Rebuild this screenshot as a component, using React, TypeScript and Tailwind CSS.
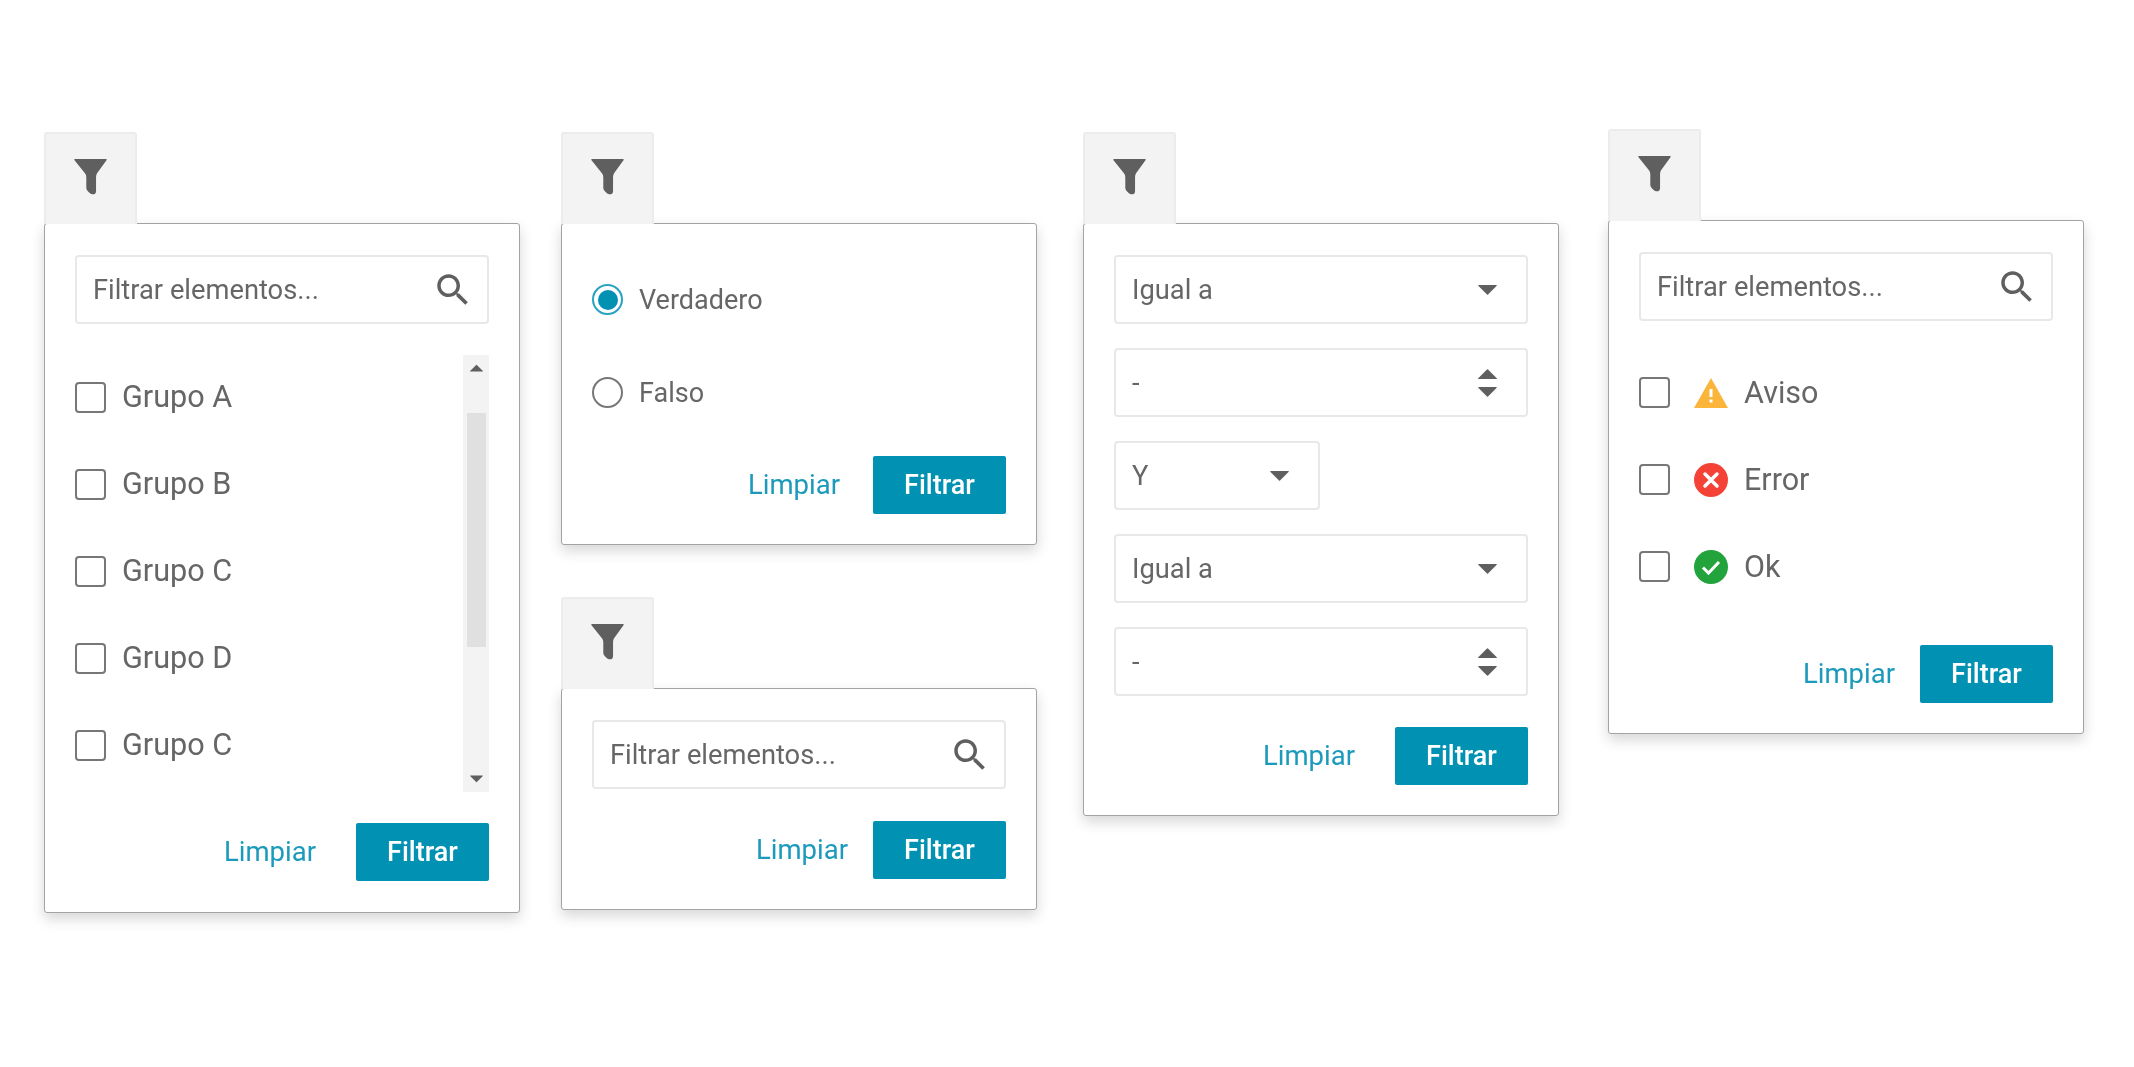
import React from 'react';

const FilterIcon = () => (
  <svg viewBox="0 0 97 107" className="w-[33px] h-[36px] text-[#5f5f5f]" fill="currentColor">
    <path d="M2 0H95Q98 0 96 4L68 42Q65 47 65 54V94Q65 106 54 105Q50 105 46 101L40 95Q36 91 36 86V54Q36 47 32 42L1 4Q-1 0 2 0Z" />
  </svg>
);

const SearchIcon = () => (
  <svg viewBox="0 0 24 24" className="w-[42px] h-[42px] text-[#5f5f5f]" fill="currentColor">
    <path d="M15.5 14h-.79l-.28-.27C15.41 12.59 16 11.11 16 9.5 16 5.91 13.09 3 9.5 3S3 5.91 3 9.5 5.91 16 9.5 16c1.61 0 3.09-.59 4.23-1.57l.27.28v.79l5 4.99L20.49 19l-4.99-5zm-6 0C7.01 14 5 11.99 5 9.5S7.01 5 9.5 5 14 7.01 14 9.5 11.99 14 9.5 14z" />
  </svg>
);

const CaretDown = ({ className = 'w-[19px] h-[10px]' }: { className?: string }) => (
  <svg viewBox="0 0 19 10" className={`${className} text-[#5f5f5f]`} fill="currentColor">
    <path d="M1 0H18Q19.500 0 18.500 1L10 9.500Q9.500 10 9 9.500L.5 1Q-.5 0 1 0Z" />
  </svg>
);

const CaretUp = ({ className = 'w-[19px] h-[10px]' }: { className?: string }) => (
  <svg viewBox="0 0 19 10" className={`${className} text-[#5f5f5f]`} fill="currentColor">
    <path d="M1 10H18Q19.500 10 18.500 9L10 .5Q9.500 0 9 .5L.5 9Q-.5 10 1 10Z" />
  </svg>
);

const WarningIcon = () => (
  <svg viewBox="0 0 34 30" className="w-[34px] h-[30px]">
    <path d="M17 0L34 30H0Z" fill="#fbb53a" />
    <rect x="15.500" y="11" width="3" height="8" fill="#fff" />
    <rect x="15.500" y="21.500" width="3" height="3" fill="#fff" />
  </svg>
);

const ErrorIcon = () => (
  <svg viewBox="0 0 34 34" className="w-[34px] h-[34px]">
    <circle cx="17" cy="17" r="17" fill="#f44336" />
    <path d="M11 11L23 23M23 11L11 23" stroke="#fff" strokeWidth="3.500" strokeLinecap="round" />
  </svg>
);

const OkIcon = () => (
  <svg viewBox="0 0 34 34" className="w-[34px] h-[34px]">
    <circle cx="17" cy="17" r="17" fill="#22a33c" />
    <path d="M9 17.500L14.500 23L25 12" stroke="#fff" strokeWidth="3" fill="none" />
  </svg>
);

const Checkbox = () => <span className="block w-[31px] h-[31px] shrink-0 rounded-[4px] border-2 border-[#777] bg-white" />;

const Panel = ({ children, className = '' }: { children: React.ReactNode; className?: string }) => (
  <div className={`w-[476px] ${className}`}>
    <div className="relative z-10 -mb-[1px] flex h-[92px] w-[93px] items-center justify-center rounded-t-[3px] border-x-2 border-t-2 border-[#ececec] bg-[#f3f3f3] pb-[4px]">
      <FilterIcon />
    </div>
    <div className="rounded-[3px] border border-[#a3a3a3] bg-white px-[30px] shadow-[0_6px_14px_rgba(0,0,0,0.16)]">{children}</div>
  </div>
);

const Actions = ({ gap }: { gap: string }) => (
  <div className={`flex items-center justify-end ${gap}`}>
    <span className="text-[27.500px] text-[#1b9abb]">Limpiar</span>
    <span className="flex h-[58px] w-[133px] items-center justify-center rounded-[2px] bg-[#0091b3] text-[27px] font-medium text-white">Filtrar</span>
  </div>
);

const Field = ({ children, className = 'w-full' }: { children: React.ReactNode; className?: string }) => (
  <div className={`flex h-[69px] items-center justify-between rounded-[4px] border-2 border-[#e8e8e8] bg-white pl-[16px] text-[27.300px] text-[#666] ${className}`}>
    {children}
  </div>
);

const SearchField = () => (
  <Field>
    <span className="pt-[2px]">Filtrar elementos...</span>
    <span className="mr-[13px]">
      <SearchIcon />
    </span>
  </Field>
);

const SelectField = ({ label, className }: { label: string; className?: string }) => (
  <Field className={className}>
    <span className="pt-[2px]">{label}</span>
    <span className="mr-[29px]">
      <CaretDown />
    </span>
  </Field>
);

const NumberField = () => (
  <Field>
    <span className="pt-[2px]">-</span>
    <span className="mr-[29px] flex flex-col gap-[8px]">
      <CaretUp />
      <CaretDown />
    </span>
  </Field>
);

const groups = ['Grupo A', 'Grupo B', 'Grupo C', 'Grupo D', 'Grupo C'];

export default function App() {
  return (
    <div className="flex min-h-[1067px] bg-white pl-[44px] pt-[132px] font-['Roboto',sans-serif] text-[#666] blur-[0.4px]">
      <Panel>
        <div className="pt-[31px] pb-[31px]">
          <SearchField />
          <div className="mt-[30px] flex h-[438px]">
            <div className="flex-1">
              {groups.map((g, i) => (
                <div key={i} className="flex h-[87px] items-center gap-[16px] text-[30.600px]">
                  <Checkbox />
                  <span className="pb-[2px]">{g}</span>
                </div>
              ))}
            </div>
            <div className="mt-[1px] flex w-[26px] flex-col items-center bg-[#f3f3f3]">
              <div className="flex h-[26px] items-center">
                <CaretUp className="w-[13px] h-[8px]" />
              </div>
              <div className="mt-[32px] h-[234px] w-[19px] bg-[#e0e0e0]" />
              <div className="mt-auto flex h-[26px] items-center">
                <CaretDown className="w-[13px] h-[8px]" />
              </div>
            </div>
          </div>
          <div className="mt-[31px]">
            <Actions gap="gap-[40px]" />
          </div>
        </div>
      </Panel>

      <div className="ml-[41px] flex flex-col gap-[52px]">
        <Panel>
          <div className="pt-[29px] pb-[30px]">
            <div className="flex h-[93px] items-center gap-[16px] text-[27px]">
              <span className="flex h-[31px] w-[31px] items-center justify-center rounded-full border-2 border-[#27a3c2]">
                <span className="h-[20px] w-[20px] rounded-full bg-[#0091b3]" />
              </span>
              <span className="pt-[1px]">Verdadero</span>
            </div>
            <div className="flex h-[93px] items-center gap-[16px] text-[27px]">
              <span className="h-[31px] w-[31px] rounded-full border-2 border-[#777]" />
              <span className="pt-[1px]">Falso</span>
            </div>
            <div className="mt-[17px]">
              <Actions gap="gap-[33px]" />
            </div>
          </div>
        </Panel>
        <Panel>
          <div className="pt-[31px] pb-[30px]">
            <SearchField />
            <div className="mt-[32px]">
              <Actions gap="gap-[25px]" />
            </div>
          </div>
        </Panel>
      </div>

      <div className="ml-[46px]">
        <Panel>
          <div className="flex flex-col gap-[24px] pt-[31px] pb-[30px]">
            <SelectField label="Igual a" />
            <NumberField />
            <SelectField label="Y" className="w-[206px]" />
            <SelectField label="Igual a" />
            <NumberField />
            <div className="mt-[7px]">
              <Actions gap="gap-[40px]" />
            </div>
          </div>
        </Panel>
      </div>

      <div className="ml-[49px] -mt-[3px]">
        <Panel>
          <div className="pt-[31px] pb-[30px]">
            <SearchField />
            <div className="mt-[28px]">
              <div className="flex h-[87px] items-center text-[30.500px]">
                <Checkbox />
                <span className="ml-[24px] flex w-[34px] justify-center">
                  <WarningIcon />
                </span>
                <span className="ml-[16px]">Aviso</span>
              </div>
              <div className="flex h-[87px] items-center text-[30.500px]">
                <Checkbox />
                <span className="ml-[24px] flex w-[34px] justify-center">
                  <ErrorIcon />
                </span>
                <span className="ml-[16px]">Error</span>
              </div>
              <div className="flex h-[87px] items-center text-[30.500px]">
                <Checkbox />
                <span className="ml-[24px] flex w-[34px] justify-center">
                  <OkIcon />
                </span>
                <span className="ml-[16px]">Ok</span>
              </div>
            </div>
            <div className="mt-[35px]">
              <Actions gap="gap-[25px]" />
            </div>
          </div>
        </Panel>
      </div>
    </div>
  );
}
